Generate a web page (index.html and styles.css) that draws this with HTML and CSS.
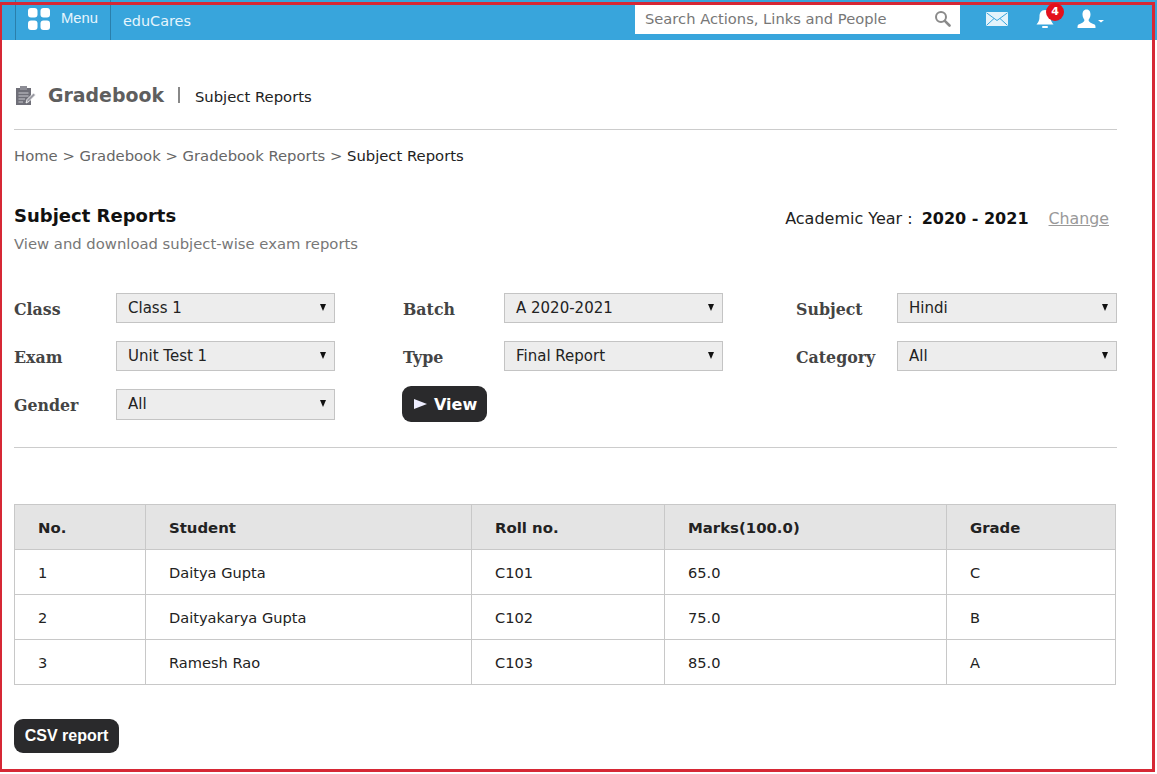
FILE: index.html
```html
<!DOCTYPE html>
<html>
	<head>
		<meta charset="UTF-8">
		<title>Subject Reports</title>
		<link rel="stylesheet" href="styles.css">
	</head>

	<body>
		<div class="frame"></div>

		<div class="topbar">
			<div class="menu">
				<svg class="menu-icon" width="22" height="22" viewBox="0 0 22 22">
					<rect x="0" y="0" width="9.5" height="9.5" rx="3" fill="#fff"/>
					<rect x="12.5" y="0" width="9.5" height="9.5" rx="3" fill="#fff"/>
					<rect x="0" y="12.5" width="9.5" height="9.5" rx="3" fill="#fff"/>
					<rect x="12.5" y="12.5" width="9.5" height="9.5" rx="3" fill="#fff"/>
				</svg>
				<span>Menu</span>
			</div>
			<div class="brand">eduCares</div>
			<div class="search">
				<span>Search Actions, Links and People</span>
				<svg width="17" height="17" viewBox="0 0 17 17">
					<circle cx="7" cy="7" r="5" fill="none" stroke="#8a8a8a" stroke-width="2"/>
					<path d="M10.8 10.8L15.5 15.5" stroke="#8a8a8a" stroke-width="2.6" stroke-linecap="round"/>
				</svg>
			</div>
			<svg class="mail" width="22" height="14" viewBox="0 0 22 14">
				<rect x="0" y="0" width="22" height="14" fill="#e4f3fb"/>
				<path d="M0.5 0.8L11 8.5L21.5 0.8M0.5 13.4L8 6.5M21.5 13.4L14 6.5" fill="none" stroke="#38a5dc" stroke-width="1"/>
			</svg>
			<div class="bell">
				<svg width="20" height="20" viewBox="0 0 20 20">
					<path d="M10 1C6 1 4.5 4 4.5 7.5C4.5 11.5 3.5 13 1.5 15.5H18.5C16.5 13 15.5 11.5 15.5 7.5C15.5 4 14 1 10 1Z" fill="#fff"/>
					<rect x="7" y="17" width="6" height="2" rx="1" fill="#fff"/>
				</svg>
				<span class="badge">4</span>
			</div>
			<svg class="user" width="28" height="20" viewBox="0 0 28 20">
				<path d="M9.5 0.5C6.5 0.5 5.5 3 5.5 5.5C5.5 8 6.8 10 7.5 11C7.5 13 5 14 1.5 15.5C0.5 16 0.5 18 0.5 19H18.5C18.5 18 18.5 16 17.5 15.5C14 14 11.5 13 11.5 11C12.2 10 13.5 8 13.5 5.5C13.5 3 12.5 0.5 9.5 0.5Z" fill="#fff"/>
				<path d="M21 11H27L24 13.5Z" fill="#fff"/>
			</svg>
		</div>

		<div class="content">
			<div class="page-head">
				<svg width="21" height="21" viewBox="0 0 21 21">
					<rect x="1" y="3" width="15" height="17" fill="#6f6f78"/>
					<rect x="5" y="1" width="7" height="4" fill="#8d8d95"/>
					<path d="M3.5 8H13.5M3.5 11H13.5M3.5 14H10M3.5 17H8" stroke="#c9c9ce" stroke-width="1"/>
					<path d="M11 18L12 14.5L18.5 8L20.5 10L14 16.5Z" fill="#9a9aa2" stroke="#fff" stroke-width="0.8"/>
				</svg>
				<h1>Gradebook</h1>
				<span class="sep"></span>
				<span class="page-sub">Subject Reports</span>
			</div>

			<div class="crumbs">
				<a>Home</a> &gt; <a>Gradebook</a> &gt; <a>Gradebook Reports</a> &gt; <b>Subject Reports</b>
			</div>

			<div class="intro">
				<div>
					<h2>Subject Reports</h2>
					<p>View and download subject-wise exam reports</p>
				</div>
				<div class="year">
					Academic Year :<b>2020 - 2021</b><a>Change</a>
				</div>
			</div>

			<div class="filters">
				<label>Class</label>
				<div class="select">Class 1</div>
				<label class="mid">Batch</label>
				<div class="select">A 2020-2021</div>
				<label class="end">Subject</label>
				<div class="select">Hindi</div>

				<label>Exam</label>
				<div class="select">Unit Test 1</div>
				<label class="mid">Type</label>
				<div class="select">Final Report</div>
				<label class="end">Category</label>
				<div class="select">All</div>

				<label>Gender</label>
				<div class="select">All</div>
				<div class="mid view-cell"><button class="btn btn-view"><i class="play"></i>View</button></div>
			</div>

			<table>
				<tr>
					<th class="col1">No.</th>
					<th class="col2">Student</th>
					<th class="col3">Roll no.</th>
					<th class="col4">Marks(100.0)</th>
					<th>Grade</th>
				</tr>
				<tr>
					<td>1</td>
					<td>Daitya Gupta</td>
					<td>C101</td>
					<td>65.0</td>
					<td>C</td>
				</tr>
				<tr>
					<td>2</td>
					<td>Daityakarya Gupta</td>
					<td>C102</td>
					<td>75.0</td>
					<td>B</td>
				</tr>
				<tr>
					<td>3</td>
					<td>Ramesh Rao</td>
					<td>C103</td>
					<td>85.0</td>
					<td>A</td>
				</tr>
			</table>

			<button class="btn btn-csv">CSV report</button>
		</div>
	</body>
</html>
```

FILE: styles.css
```css
*{
	margin: 0;
	padding: 0;
	box-sizing: border-box;
}
body{
	font-family: "DejaVu Sans", Verdana, sans-serif;
	font-size: 14.8px;
	color: #222;
	background: #fff;
	height: 774px;
	overflow: hidden;
}

/* red annotation round the shot */
.frame{
	position: absolute;
	left: 0;
	top: 2px;
	width: 1155px;
	height: 770px;
	border: 3px solid #d62835;
	border-left-width: 2px;
	pointer-events: none;
}

.topbar{
	display: flex;
	align-items: center;
	height: 40px;
	background: #38a5dc;
	color: #e6f5fc;
	padding-left: 15px;
}
.menu{
	display: flex;
	align-items: center;
	height: 40px;
	width: 96px;
	padding: 0 0 2px 12px;
	border-left: 1px solid #2a7fab;
	border-right: 1px solid #2a7fab;
	font-family: "Liberation Sans", Arial, sans-serif;
	font-size: 14.8px;
}
.menu span{
	margin: 0 0 2px 11px;
}
.brand{
	margin-left: 12px;
	padding-top: 1px;
	font-size: 14.4px;
	width: 512px;
}
.search{
	display: flex;
	align-items: center;
	justify-content: space-between;
	width: 325px;
	height: 29px;
	margin-bottom: 2px;
	padding: 0 9px 2px 10px;
	background: #fff;
	color: #777;
	font-size: 14.7px;
}
.mail{
	margin-left: 26px;
	margin-bottom: 2px;
}
.bell{
	position: relative;
	margin-left: 27px;
	height: 20px;
	margin-bottom: 2px;
}
.badge{
	position: absolute;
	left: 11px;
	top: -6px;
	width: 18px;
	height: 18px;
	border-radius: 9px;
	background: #e3101c;
	color: #fff;
	font-size: 11px;
	font-weight: bold;
	line-height: 18px;
	text-align: center;
}
.user{
	margin-left: 22px;
	margin-bottom: 2px;
}

.content{
	width: 1103px;
	margin-left: 14px;
}
.page-head{
	display: flex;
	align-items: center;
	height: 90px;
	padding: 21px 0 0 1px;
	border-bottom: 1px solid #ccc;
}
.page-head h1{
	margin-left: 12px;
	font-size: 18.9px;
	color: #5e5e5e;
}
.sep{
	width: 2px;
	height: 16px;
	margin: 0 15px 0 14px;
	background: #888;
}
.page-sub{
	color: #222;
	padding-top: 3px;
}
.crumbs{
	margin-top: 17px;
	line-height: 18px;
	color: #666;
}
.crumbs b{
	font-weight: normal;
	color: #222;
}
.intro{
	display: flex;
	justify-content: space-between;
	margin-top: 40px;
}
.intro h2{
	font-size: 18px;
	line-height: 22px;
	color: #111;
}
.intro p{
	margin-top: 8px;
	color: #777;
}
.year{
	padding: 4px 8px 0 0;
	font-size: 16px;
	color: #222;
}
.year b{
	margin-left: 9px;
	color: #111;
}
.year a{
	margin-left: 20px;
	font-size: 15.8px;
	color: #999;
	text-decoration: underline;
}

.filters{
	display: grid;
	grid-template-columns: 102px 219px 68px 101px 219px 73px 101px 220px;
	grid-template-rows: 30px 30px 31px;
	row-gap: 18px;
	margin-top: 41px;
	padding-bottom: 27px;
	border-bottom: 1px solid #ccc;
}
.filters label{
	font-family: "DejaVu Serif", Georgia, serif;
	font-weight: bold;
	font-size: 15.8px;
	line-height: 34px;
	color: #444;
}
.mid{
	grid-column: 4;
}
.end{
	grid-column: 7;
}
.select{
	position: relative;
	padding-left: 11px;
	border: 1px solid #c4c4c4;
	background: #ededed;
	color: #222;
	font-size: 15px;
	line-height: 29px;
}
.select::after{
	content: "";
	position: absolute;
	right: 8px;
	top: 10px;
	border-left: 3.5px solid transparent;
	border-right: 3.5px solid transparent;
	border-top: 7px solid #111;
}
.btn{
	display: block;
	border: 0;
	border-radius: 9px;
	background: #2a2a2c;
	color: #fff;
	font-weight: bold;
}
.view-cell{
	margin-left: -1px;
}
.btn-view{
	display: flex;
	align-items: center;
	width: 85px;
	height: 36px;
	margin-top: -3px;
	padding-left: 12px;
	font-family: "DejaVu Sans", Verdana, sans-serif;
	font-size: 16px;
}
.play{
	width: 0;
	height: 0;
	margin-right: 7px;
	border-left: 13px solid #eef;
	border-top: 5.5px solid transparent;
	border-bottom: 5.5px solid transparent;
}

table{
	width: 1102px;
	margin-top: 56px;
	border-collapse: collapse;
	table-layout: fixed;
}
th, td{
	height: 45px;
	padding-left: 23px;
	border: 1px solid #c8c8c8;
	text-align: left;
	font-size: 14.6px;
	color: #222;
}
th{
	padding-top: 1px;
	background: #e4e4e4;
	font-size: 14.9px;
}
.col1{ width: 131px; }
.col2{ width: 326px; }
.col3{ width: 193px; }
.col4{ width: 282px; }

.btn-csv{
	width: 105px;
	height: 34px;
	margin-top: 34px;
	font-family: "Liberation Sans", Arial, sans-serif;
	font-size: 16px;
}
```
